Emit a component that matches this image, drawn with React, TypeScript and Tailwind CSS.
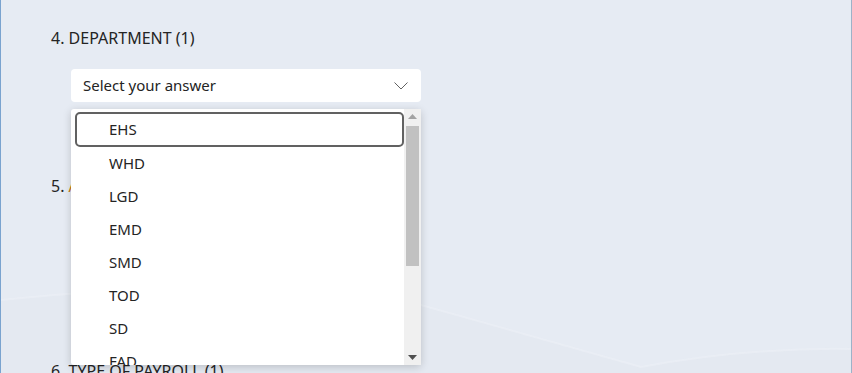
const departments = ['EHS', 'WHD', 'LGD', 'EMD', 'SMD', 'TOD', 'SD', 'FAD', 'QAD', 'HRD', 'ITD', 'PRD'];

export default function App() {
  return (
    <div
      className="relative h-[373px] w-full overflow-hidden border-l border-r border-l-[#7aa3cf] border-r-[#9db2c8] bg-[#e6ebf3] text-[#242424]"
      style={{ fontFamily: '"Segoe UI", "Noto Sans", "Open Sans", sans-serif' }}
    >
      {/* soft background waves */}
      <svg className="pointer-events-none absolute inset-0" width="852" height="373" viewBox="0 0 852 373">
        <path d="M0 373 L0 300 C 150 285, 260 280, 420 305 L 640 367 C 720 352, 790 348, 852 349 L852 373 Z" fill="#e2e8f0" opacity="0.5" />
        <path d="M0 300 C 150 285, 260 280, 420 305 L 640 367 C 720 352, 790 348, 852 349" fill="none" stroke="#ecf0f6" strokeWidth="2" opacity="0.6" />
      </svg>

      <div className="relative pl-[50px] pt-[28px]">
        <div className="text-[16px] leading-5">4. DEPARTMENT (1)</div>

        <div className="relative ml-[20px] mt-[21px] w-[350px]">
          <div className="flex h-[33px] items-center justify-between rounded-[4px] bg-white pl-3 pr-[13px] text-[15px]">
            <span>Select your answer</span>
            <svg width="14" height="8" viewBox="0 0 14 8">
              <path d="M0.5 0.5 L7 7 L13.5 0.5" fill="none" stroke="#616161" strokeWidth="1" />
            </svg>
          </div>

          {/* open dropdown list */}
          <div className="absolute left-0 top-[40px] z-10 flex h-[256px] w-[350px] rounded-[3px] bg-white shadow-[0_2px_8px_rgba(0,0,0,0.18)]">
            <div className="flex-1 overflow-hidden pl-1 pt-[3px]">
              {departments.map((d, i) => (
                <div
                  key={d}
                  className={
                    i === 0
                      ? 'flex h-[35px] items-center rounded-[5px] border-2 border-[#616161] pl-[32px] text-[15px]'
                      : 'flex h-[33px] items-center pl-[34px] text-[15px]'
                  }
                >
                  {d}
                </div>
              ))}
            </div>
            <div className="flex w-[17px] flex-col items-center bg-[#f0f0f0]">
              <div className="flex h-[15px] w-full items-center justify-center">
                <svg width="9" height="5" viewBox="0 0 9 5"><path d="M0 5 L4.5 0 L9 5 Z" fill="#a3a3a3" /></svg>
              </div>
              <div className="mt-[2px] h-[140px] w-[13px] bg-[#c1c1c1]" />
              <div className="flex-1" />
              <div className="flex h-[15px] w-full items-center justify-center">
                <svg width="9" height="5" viewBox="0 0 9 5"><path d="M0 0 L4.5 5 L9 0 Z" fill="#505050" /></svg>
              </div>
            </div>
          </div>
        </div>

        <div className="mt-[74px] text-[16px] leading-5">
          5. <span className="text-[#c47a10]">ATTENDANCE STATUS</span>
        </div>

        <div className="ml-[20px] mt-[20px] h-[33px] w-[350px] rounded-[4px] bg-white" />

        <div className="mt-[112px] text-[16px] leading-5">6. TYPE OF PAYROLL (1)</div>
      </div>
    </div>
  );
}
